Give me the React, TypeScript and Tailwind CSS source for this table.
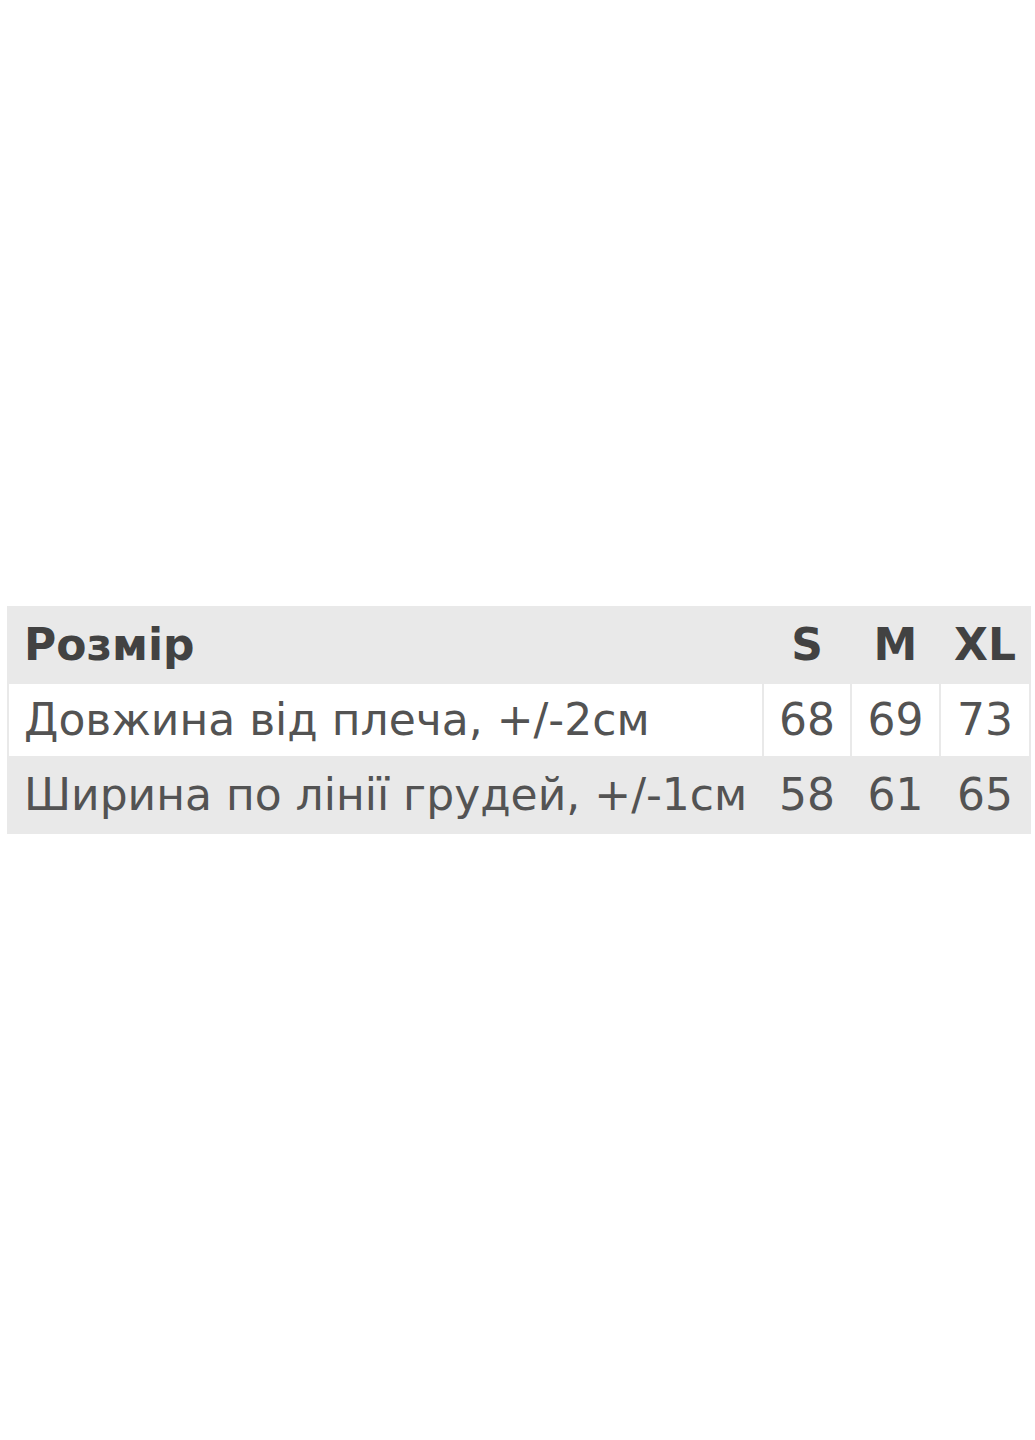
const sizes = ['S', 'M', 'XL'];

const rows = [
  { label: 'Довжина від плеча, +/-2см', values: ['68', '69', '73'], white: true },
  { label: 'Ширина по лінії грудей, +/-1см', values: ['58', '61', '65'], white: false },
];

export default function App() {
  return (
    <div
      className="flex h-[1440px] items-center bg-white pl-[7px] pr-[4px]"
      style={{ fontFamily: '"DejaVu Sans", "Noto Sans", sans-serif' }}
    >
      <table className="w-[1024px] table-fixed border-separate border-spacing-[2px] bg-[#e9e9e9]">
        <colgroup>
          <col className="w-[753px]" />
          <col className="w-[86px]" />
          <col className="w-[87px]" />
          <col className="w-[88px]" />
        </colgroup>
        <thead>
          <tr className="h-[74px]">
            <th className="pl-[15px] text-left text-[44px] leading-none font-bold text-[#424242]">
              Розмір
            </th>
            {sizes.map((s) => (
              <th key={s} className="text-center text-[44px] leading-none font-bold text-[#424242]">
                {s}
              </th>
            ))}
          </tr>
        </thead>
        <tbody>
          {rows.map((row) => (
            <tr key={row.label} className={row.white ? 'h-[72px]' : 'h-[74px]'}>
              <td
                className={`whitespace-nowrap pl-[15px] text-left text-[44px] leading-none text-[#535353] ${
                  row.white ? 'bg-white' : ''
                }`}
              >
                {row.label}
              </td>
              {row.values.map((v, i) => (
                <td
                  key={i}
                  className={`text-center text-[44px] leading-none text-[#535353] ${
                    row.white ? 'bg-white' : ''
                  }`}
                >
                  {v}
                </td>
              ))}
            </tr>
          ))}
        </tbody>
      </table>
    </div>
  );
}
